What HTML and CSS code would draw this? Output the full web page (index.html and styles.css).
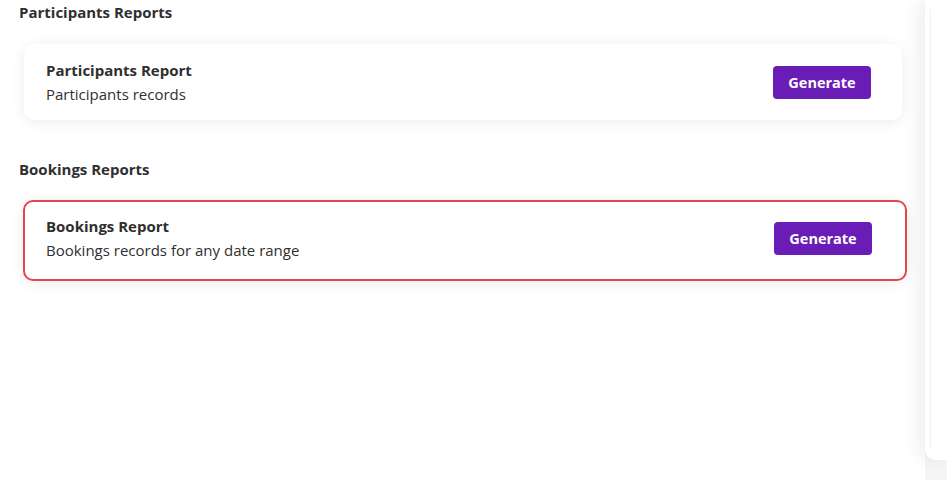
FILE: index.html
```html
<!DOCTYPE html>
<html lang="en">
<head>
    <meta charset="UTF-8">
    <meta name="viewport" content="width=device-width, initial-scale=1.0">
    <title>Reports</title>
    <link rel="stylesheet" href="styles.css">
</head>
<body>
    <div class="layout">
        <main class="main">
            <h2 class="section-title">Participants Reports</h2>
            <div class="report-card">
                <div class="report-info">
                    <div class="report-name">Participants Report</div>
                    <div class="report-desc">Participants records</div>
                </div>
                <button class="generate-btn">Generate</button>
            </div>

            <h2 class="section-title">Bookings Reports</h2>
            <div class="report-card highlighted">
                <div class="report-info">
                    <div class="report-name">Bookings Report</div>
                    <div class="report-desc">Bookings records for any date range</div>
                </div>
                <button class="generate-btn">Generate</button>
            </div>
        </main>
        <aside class="side-panel">
            <div class="side-inner"></div>
        </aside>
    </div>
</body>
</html>
```

FILE: styles.css
```css
body {
    font-family: "Open Sans", Lato, sans-serif;
    background-color: #f5f5f5;
    margin: 0;
    color: #2f2f2f;
}
.layout {
    display: flex;
    height: 480px;
    overflow: hidden;
}
.main {
    flex: 1;
    background: #fff;
    padding: 0 0 0 19px;
}
.section-title {
    font-size: 15px;
    font-weight: 700;
    line-height: 24px;
    margin: 0 0 20px 0;
    color: #2f2f2f;
}
.report-card {
    display: flex;
    align-items: center;
    justify-content: space-between;
    background: #fff;
    border-radius: 10px;
    box-shadow: 0 2px 14px rgba(0, 0, 0, 0.08);
    padding: 14px 31px 14px 22px;
    margin: 0 23px 37px 5px;
}
.report-card.highlighted {
    border: 2px solid #e0474f;
    padding: 12px 33px 17px 21px;
    margin: -1px 18px 0 4px;
}
.report-name {
    font-size: 15px;
    font-weight: 700;
    line-height: 24px;
}
.report-desc {
    font-size: 15px;
    line-height: 24px;
}
.generate-btn {
    width: 98px;
    height: 33px;
    background-color: #6a1db6;
    color: #fff;
    border: none;
    border-radius: 4px;
    font-family: inherit;
    font-size: 14.5px;
    font-weight: 700;
    cursor: pointer;
}
.generate-btn:hover {
    background-color: #5a169c;
}
.side-panel {
    position: relative;
    z-index: 1;
    width: 22px;
    height: 460px;
    background: #fff;
    border-bottom-left-radius: 10px;
    box-shadow: -6px 0 18px rgba(0, 0, 0, 0.07);
    padding: 10px 0 0 5px;
    box-sizing: border-box;
}
.side-inner {
    height: 440px;
    border-left: 1px solid #f1f1f1;
}
```
